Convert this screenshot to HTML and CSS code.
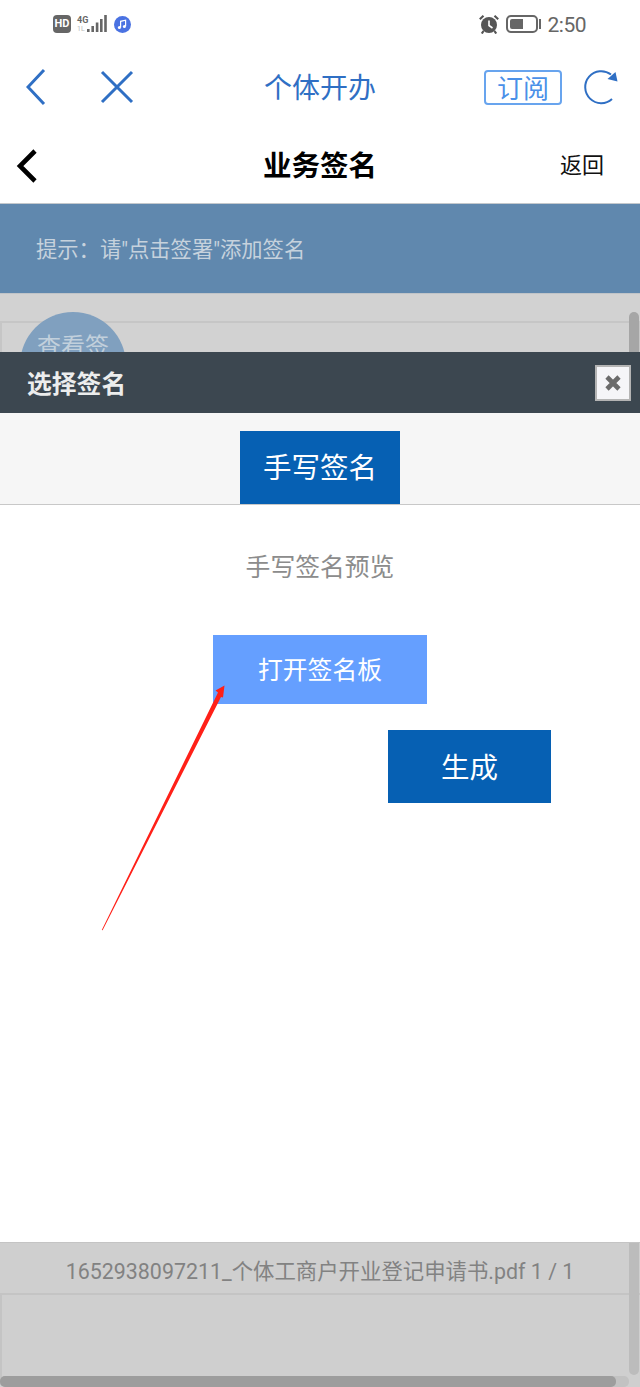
FILE: index.html
```html
<!DOCTYPE html>
<html lang="zh-CN">
<head>
    <meta charset="utf-8" />
    <title>业务签名</title>
    <link rel="stylesheet" href="styles.css">
</head>
<body>
    <div class="page">
        <div class="statusbar">
            <div class="status_left">
                <span class="hd">HD</span>
                <span class="net"><span class="net_top">4G</span><span class="net_sub">1L</span></span>
                <svg class="bars" width="20" height="18" viewBox="0 0 20 18">
                    <rect x="0" y="14" width="2.6" height="3" fill="#666" />
                    <rect x="4.4" y="11" width="2.6" height="6" fill="#666" />
                    <rect x="8.8" y="7.5" width="2.6" height="9.5" fill="#666" />
                    <rect x="13" y="4" width="2.6" height="13" fill="#666" />
                    <rect x="17.2" y="0" width="2.6" height="17" fill="#666" />
                </svg>
                <svg class="music" width="17" height="17" viewBox="0 0 17 17">
                    <circle cx="8.5" cy="8.5" r="8.5" fill="#4a72e2" />
                    <path d="M6.6 11.4V5.3l5-1.1v6.1" fill="none" stroke="#fff" stroke-width="1.2" />
                    <circle cx="5.4" cy="11.5" r="1.5" fill="#fff" />
                    <circle cx="10.4" cy="10.4" r="1.5" fill="#fff" />
                </svg>
            </div>
            <div class="status_right">
                <svg width="20" height="19" viewBox="0 0 20 19">
                    <circle cx="10" cy="10" r="8" fill="#555" />
                    <path d="M10 5.5V10.500l3.500 2.500" fill="none" stroke="#fff" stroke-width="1.6" />
                    <path d="M.8 4.200 4.500.8M15.500.8 19.200 4.200M4.500 16 2.800 18.500M15.500 16 17.200 18.500" stroke="#555" stroke-width="2.200" fill="none" />
                </svg>
                <span class="battery"><span class="battery_fill"></span></span>
                <span class="battery_nub"></span>
                <span class="time">2:50</span>
            </div>
        </div>

        <div class="navbar">
            <svg class="nav_back" width="20" height="38" viewBox="0 0 20 38">
                <path d="M18 2 2 19l16 17" fill="none" stroke="#2f6fc4" stroke-width="3" />
            </svg>
            <svg class="nav_close" width="34" height="34" viewBox="0 0 34 34">
                <path d="M2 2l30 30M32 2 2 32" fill="none" stroke="#2f6fc4" stroke-width="3" />
            </svg>
            <span class="nav_title">个体开办</span>
            <span class="subscribe">订阅</span>
            <svg class="nav_refresh" width="36" height="36" viewBox="0 0 36 36">
                <path d="M29 30A16 16 0 1 1 28 5.5" fill="none" stroke="#2f6fc4" stroke-width="2" />
                <path d="M34.5 12.5 24.5 10l8-7z" fill="#2f6fc4" />
            </svg>
        </div>

        <div class="header">
            <svg class="header_back" width="22" height="34" viewBox="0 0 22 34">
                <path d="M19 2 4 17l15 15" fill="none" stroke="#000" stroke-width="4.6" />
            </svg>
            <h2 class="header_title">业务签名</h2>
            <span class="header_link">返回</span>
        </div>

        <div class="tip">提示：请"点击签署"添加签名</div>

        <div class="behind">
            <div class="behind_panel"></div>
            <div class="behind_circle">查看签</div>
            <div class="vscroll"></div>
        </div>

        <div class="dialog_head">
            <span class="dialog_title">选择签名</span>
            <span class="dialog_close">
                <svg width="18" height="18" viewBox="0 0 18 18">
                    <path d="M3 3l12 12M15 3 3 15" stroke="#6b6b6b" stroke-width="4.6" fill="none" />
                </svg>
            </span>
        </div>

        <div class="tabs">
            <span class="tab_active">手写签名</span>
        </div>

        <div class="dialog_body">
            <p class="preview">手写签名预览</p>
            <div class="open_btn">打开签名板</div>
            <div class="make_btn">生成</div>
        </div>

        <div class="footer">
            <div class="file_name">1652938097211_个体工商户开业登记申请书.pdf 1 / 1</div>
            <div class="footer_panel"></div>
            <div class="vscroll_end"></div>
            <div class="hscroll"><div class="hscroll_thumb"></div></div>
        </div>

        <svg class="arrow" width="130" height="250" viewBox="100 684 130 250">
            <path d="M224.500 685.500 215.500 690.500 218 692.500 101.800 930 102.600 930.300 221 697 223 697.500z" fill="#ff2018" />
        </svg>
    </div>
</body>
</html>
```

FILE: styles.css
```css
* {
    font-family: Roboto, 'Noto Sans CJK SC', sans-serif;
    margin: 0px;
    padding: 0px;
    box-sizing: border-box;
}

body {
    background: #fff;
}

.page {
    width: 640px;
    height: 1387px;
    display: flex;
    flex-direction: column;
    position: relative;
    overflow: hidden;
}

/* status bar */
.statusbar {
    height: 48px;
    padding: 15px 54px 0 53px;
    display: flex;
    justify-content: space-between;
    align-items: flex-start;
}

.status_left, .status_right {
    display: flex;
    align-items: center;
    height: 18px;
}

.hd {
    width: 18px;
    height: 18px;
    border-radius: 4px;
    background: #666;
    color: #fff;
    font-size: 11px;
    font-weight: 700;
    line-height: 18px;
    text-align: center;
}

.net {
    width: 11px;
    margin-left: 6px;
    display: flex;
    flex-direction: column;
}

.net_top {
    font-size: 9px;
    font-weight: 700;
    line-height: 10px;
    color: #666;
}

.net_sub {
    font-size: 7px;
    line-height: 8px;
    color: #bbb;
}

.bars {
    margin-left: -1px;
}

.music {
    margin-left: 7px;
}

.battery {
    width: 32px;
    height: 18px;
    margin-left: 7px;
    padding: 2px;
    border: 2px solid #666;
    border-radius: 5px;
    display: block;
}

.battery_fill {
    display: block;
    width: 13px;
    height: 100%;
    border-radius: 2px 0 0 2px;
    background: #666;
}

.battery_nub {
    width: 2px;
    height: 10px;
    margin-left: 1px;
    background: #666;
}

.time {
    margin: 2px 0 0 7px;
    font-size: 21px;
    letter-spacing: -0.5px;
    line-height: 22px;
    color: #666;
}

/* blue nav */
.navbar {
    height: 78px;
    display: flex;
    align-items: center;
    position: relative;
    padding-left: 26px;
}

.nav_close {
    margin-left: 54px;
}

.nav_title {
    margin: 4px 0 0 130px;
    width: 112px;
    font-size: 28px;
    line-height: 44px;
    color: #2f6fc4;
}

.subscribe {
    margin-left: 108px;
    width: 78px;
    height: 35px;
    border: 2px solid #68a4ee;
    border-radius: 4px;
    color: #4a90e8;
    font-size: 26px;
    line-height: 34px;
    text-align: center;
}

.nav_refresh {
    margin-left: 21px;
}

/* page header */
.header {
    height: 78px;
    display: flex;
    align-items: center;
    justify-content: space-between;
    padding: 0 36px 0 13px;
    position: relative;
    border-bottom: 1px solid #c4c8cc;
}

.header_back {
    margin: 2px 0 0 3px;
}

.header_title {
    font-size: 28.5px;
    font-weight: 700;
    line-height: 44px;
    color: #000;
    margin: 5px 0 0 225px;
}

.header_link {
    margin: 2px 0 0 auto;
    font-size: 22px;
    line-height: 30px;
    color: #111;
}

.tip {
    height: 90px;
    padding-left: 36px;
    background: #6088ae;
    border-bottom: 1px solid #c0c4c8;
    color: #c6d2dd;
    font-size: 21.3px;
    line-height: 92px;
}

/* dimmed page behind dialog */
.behind {
    height: 58px;
    background: #d2d2d2;
    position: relative;
    overflow: hidden;
    padding-top: 27px;
}

.behind_panel {
    height: 60px;
    border: 2px solid #c6c6c6;
}

.behind_circle {
    position: absolute;
    left: 20px;
    top: 18px;
    width: 106px;
    height: 106px;
    border-radius: 50%;
    background: #80a0bf;
    color: #c2d0dc;
    font-size: 24px;
    line-height: 32px;
    text-align: center;
    padding-top: 19px;
}

.vscroll {
    position: absolute;
    right: 1px;
    top: 18px;
    width: 10px;
    height: 60px;
    border-radius: 5px 5px 0 0;
    background: #a6a6a6;
}

/* dialog */
.dialog_head {
    height: 61px;
    background: #3c4750;
    display: flex;
    align-items: center;
    justify-content: space-between;
    padding: 0 9px 0 27px;
}

.dialog_title {
    margin-top: -2px;
    color: #eceded;
    font-size: 24.8px;
    font-weight: 700;
}

.dialog_close {
    width: 36px;
    height: 36px;
    background: #f5f5f8;
    border: 2px solid #b4b4b4;
    display: flex;
    align-items: center;
    justify-content: center;
}

.tabs {
    height: 92px;
    background: #f6f6f6;
    border-bottom: 1px solid #c8c8c8;
    padding-top: 18px;
    display: flex;
    justify-content: center;
}

.tab_active {
    width: 160px;
    height: 73px;
    background: #0660b3;
    color: #fff;
    font-size: 28.5px;
    line-height: 76px;
    text-align: center;
}

.dialog_body {
    height: 737px;
    background: #fff;
    display: flex;
    flex-direction: column;
}

.preview {
    margin-top: 44px;
    font-size: 24.8px;
    line-height: 38px;
    color: #8c8c8c;
    text-align: center;
}

.open_btn {
    margin: 48px 0 0 213px;
    width: 214px;
    height: 69px;
    background: #659fff;
    color: #fff;
    font-size: 24.8px;
    line-height: 71px;
    text-align: center;
}

.make_btn {
    margin: 26px 0 0 388px;
    width: 163px;
    height: 73px;
    background: #0660b3;
    color: #fff;
    font-size: 28.5px;
    line-height: 78px;
    text-align: center;
}

/* bottom of the page behind dialog */
.footer {
    height: 145px;
    background: #cfcfcf;
    border-top: 1px solid #c4c4c4;
    position: relative;
}

.file_name {
    height: 52px;
    border-bottom: 2px solid #c4c4c4;
    color: #828282;
    font-size: 21.4px;
    line-height: 57px;
    text-align: center;
    white-space: nowrap;
}

.footer_panel {
    height: 90px;
    border-left: 2px solid #c4c4c4;
}

.vscroll_end {
    position: absolute;
    right: 1px;
    top: 0;
    width: 10px;
    height: 132px;
    border-radius: 0 0 5px 5px;
    background: #bcbcbc;
}

.hscroll {
    position: absolute;
    left: 0;
    bottom: 0;
    width: 629px;
    height: 11px;
    border-radius: 5px;
    background: #c2c2c2;
}

.hscroll_thumb {
    width: 616px;
    height: 11px;
    border-radius: 5px;
    background: #9d9d9d;
}

/* red annotation arrow */
.arrow {
    position: absolute;
    left: 100px;
    top: 684px;
}
```
